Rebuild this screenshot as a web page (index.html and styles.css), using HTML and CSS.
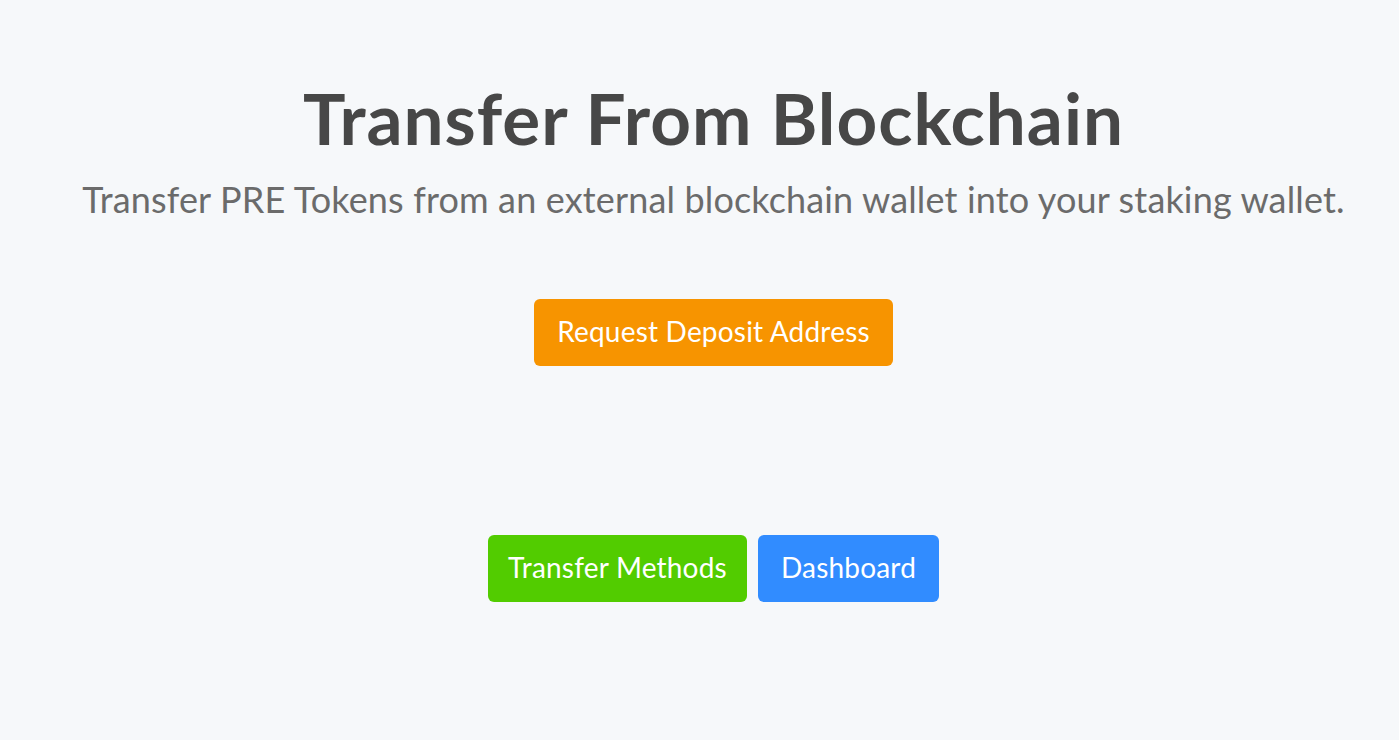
FILE: index.html
```html
<!DOCTYPE html>
<html>
<head>
<meta charset="utf-8">
<link rel="stylesheet" href="styles.css">
</head>
<body>
<main class="page">
  <h1 class="title">Transfer From Blockchain</h1>
  <p class="subtitle">Transfer PRE Tokens from an external blockchain wallet into your staking wallet.</p>
  <div class="primary-row">
    <button class="btn btn-orange btn-deposit">Request Deposit Address</button>
  </div>
  <div class="nav-row">
    <button class="btn btn-green btn-methods">Transfer Methods</button>
    <button class="btn btn-blue btn-dash">Dashboard</button>
  </div>
</main>
</body>
</html>
```
FILE: styles.css
```css
html, body {
  margin: 0;
  padding: 0;
  background: #f6f8fa;
  height: 100%;
}
body {
  font-family: Lato, "Noto Sans", sans-serif;
}
.page {
  display: flex;
  flex-direction: column;
  align-items: center;
  padding-left: 28px;
  padding-top: 74px;
}
.title {
  margin: 0;
  font-size: 71px;
  font-weight: 700;
  letter-spacing: 1px;
  color: #474747;
  line-height: 88px;
}
.subtitle {
  margin: 15px 0 0;
  font-size: 36px;
  letter-spacing: 0.15px;
  color: #6b6b6b;
  line-height: 44px;
}
.primary-row {
  margin-top: 78px;
}
.nav-row {
  margin-top: 169px;
  display: flex;
  gap: 11px;
}
.btn {
  border: none;
  border-radius: 6px;
  color: #fff;
  font-family: inherit;
  font-size: 28px;
  letter-spacing: 0.2px;
  height: 67px;
  padding: 0 0 3px;
  white-space: nowrap;
}
.btn-deposit { width: 359px; }
.btn-methods { width: 259px; }
.btn-dash { width: 181px; }
.btn-orange { background: #f79400; }
.btn-green { background: #52cc00; }
.btn-blue { background: #318cff; }
```
